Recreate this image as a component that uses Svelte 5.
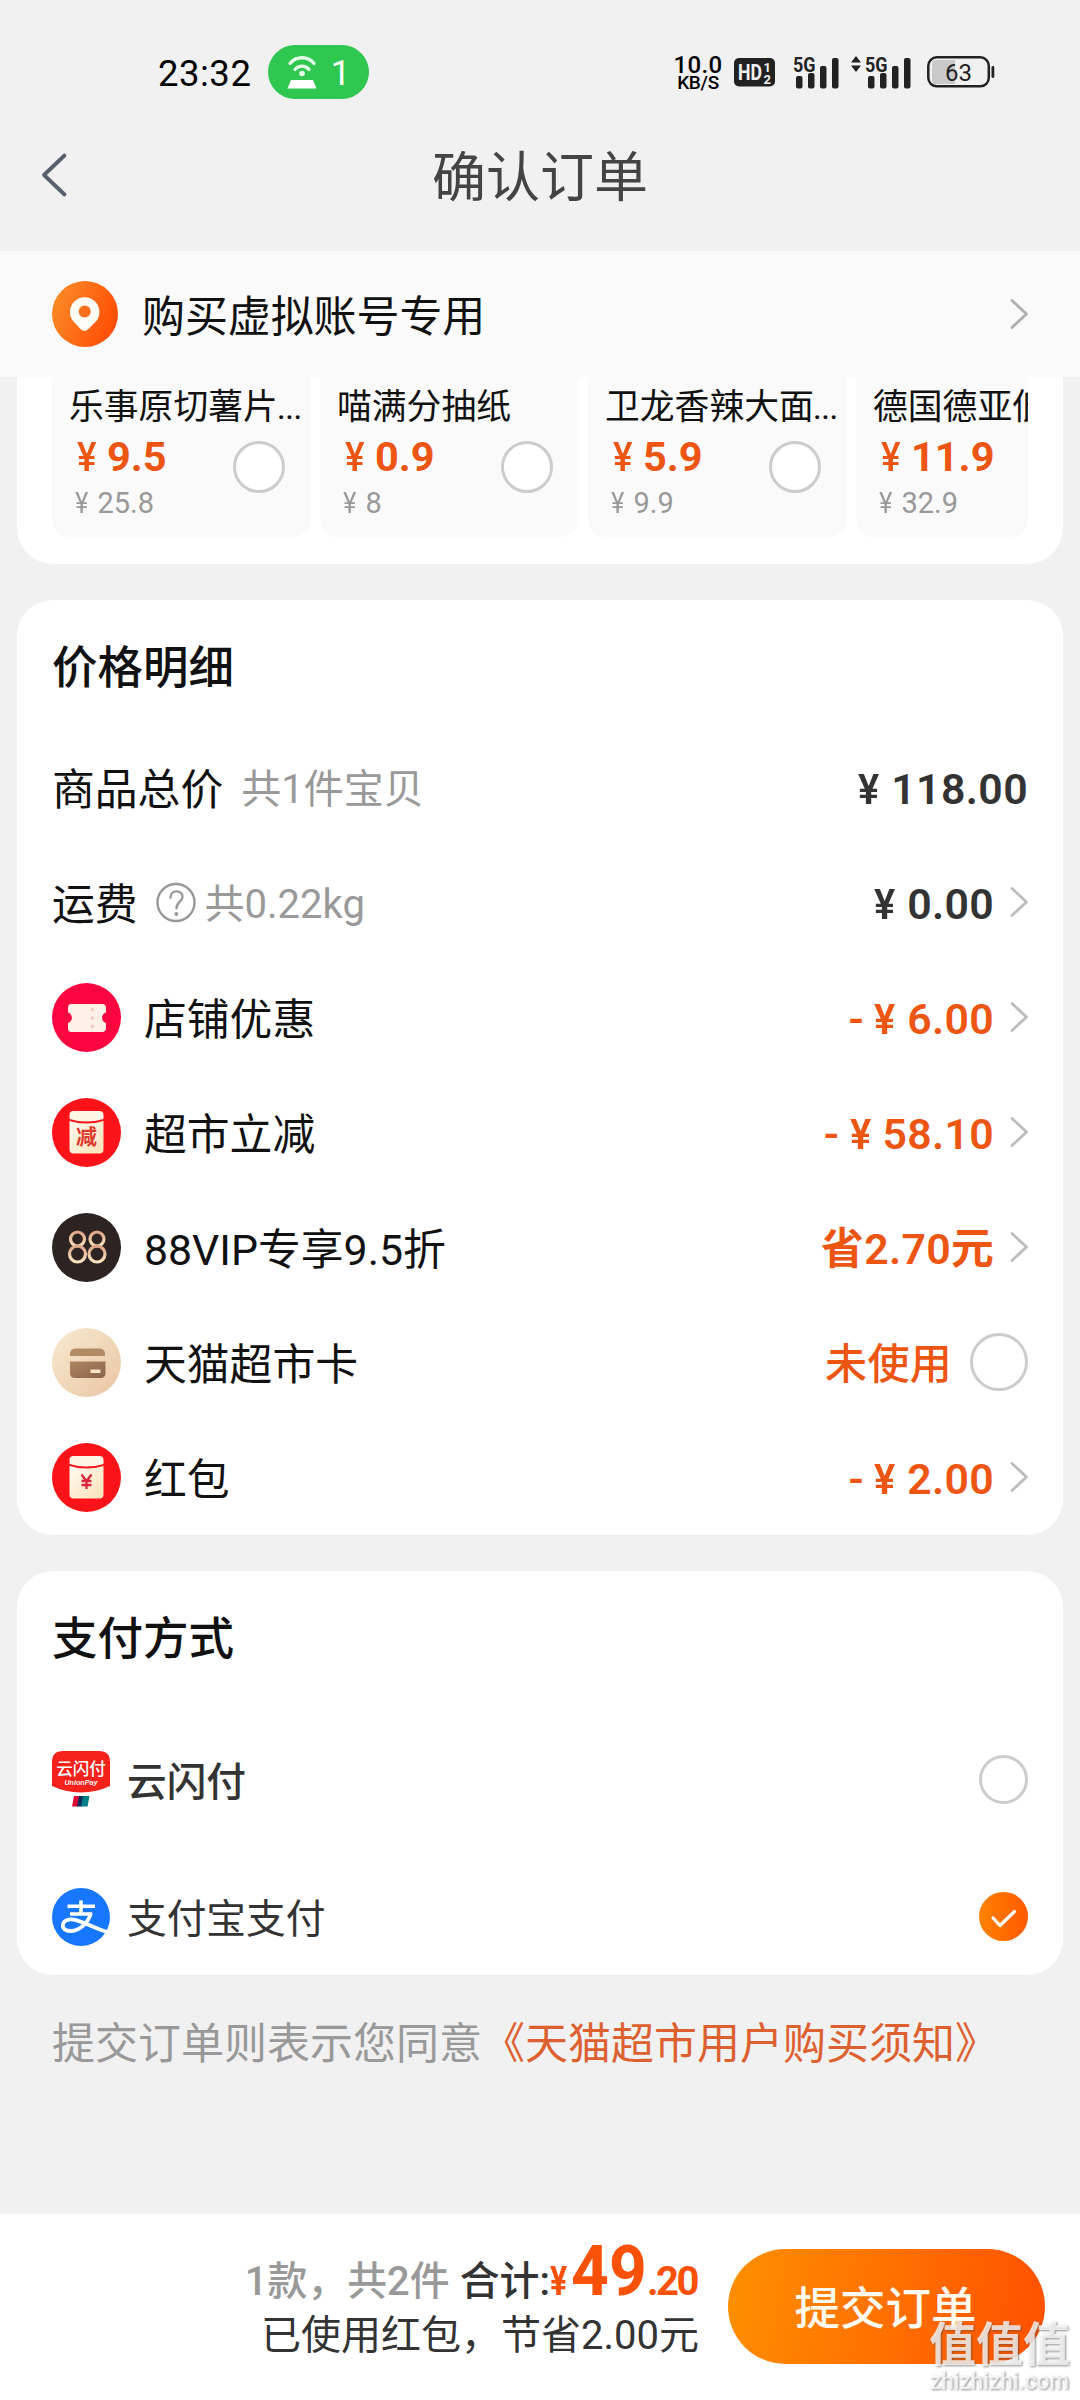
<script>
  const tiles = [
    { name: '乐事原切薯片', dots: true, price: '9.5', old: '25.8' },
    { name: '喵满分抽纸', dots: false, price: '0.9', old: '8' },
    { name: '卫龙香辣大面', dots: true, price: '5.9', old: '9.9' },
    { name: '德国德亚低脂', dots: false, price: '11.9', old: '32.9' }
  ];
  const discounts = [
    { icon: 'coupon', label: '店铺优惠', minus: true, yen: true, value: '6.00' },
    { icon: 'cut', label: '超市立减', minus: true, yen: true, value: '58.10' },
    { icon: 'vip', label: '88VIP专享9.5折', value: '省2.70元' },
    { icon: 'card', label: '天猫超市卡', value: '未使用', radio: true },
    { icon: 'packet', label: '红包', minus: true, yen: true, value: '2.00' }
  ];
</script>

{#snippet chevron()}
  <svg class="chev" viewBox="0 0 20 32"><path d="M3 2.500 17.500 16 3 29.500" fill="none" stroke="currentColor" stroke-width="2.800" stroke-linecap="round" stroke-linejoin="round" /></svg>
{/snippet}

{#snippet signal()}
  <svg width="46" height="33" viewBox="0 0 46 33">
    <text x="0" y="16" font-size="21" font-weight="700" textLength="22.500" lengthAdjust="spacingAndGlyphs" fill="#222">5G</text>
    <g fill="#222"><rect x="3" y="20" width="6.5" height="12.5" rx="2" /><rect x="15" y="17" width="6.5" height="15.5" rx="2" /><rect x="27" y="10" width="6.5" height="22.5" rx="2" /><rect x="39" y="2" width="6.5" height="30.5" rx="2" /></g>
  </svg>
{/snippet}

{#snippet envelope(id)}
  <linearGradient id={id} x1="0" y1="0" x2="1" y2="1"><stop offset="0" stop-color="#fffaf0" /><stop offset="1" stop-color="#fbe2b8" /></linearGradient>
  <circle cx="34.5" cy="34.5" r="34.5" fill="#fb1319" />
  <path d="M17.500 17q0-4 4-4h26q4 0 4 4v4q-17 5-34 0z" fill="#fff6e8" />
  <path d="M17.500 23q17 5 34 0v28.500q0 4-4 4h-26q-4 0-4-4z" fill="url(#{id})" />
{/snippet}

<div class="screen">
  <div class="status">
    <span class="clock">23:32</span>
    <span class="hotspot">
      <svg width="30" height="34" viewBox="0 0 30 34">
        <g fill="none" stroke="#e4ffe8" stroke-width="3.4" stroke-linecap="round"><path d="M3 8.500a15.500 15.500 0 0 1 24 0" /><path d="M8 14.500a9 9 0 0 1 14 0" /></g>
        <circle cx="15" cy="18.500" r="2.800" fill="#e4ffe8" />
        <path d="M4 25h22l3.500 8.500H.5z" fill="#fff" />
      </svg>
      <b>1</b>
    </span>
    <span class="speed"><b>10.0</b><i>KB/S</i></span>
    <svg class="hd" width="41" height="29" viewBox="0 0 41 29">
      <rect width="41" height="28.500" rx="5" fill="#222" />
      <g fill="#f2f2f2" font-weight="700"><text x="4" y="21.500" font-size="22" textLength="24" lengthAdjust="spacingAndGlyphs">HD</text><text x="29.500" y="13.500" font-size="13">1</text><text x="29.500" y="25.500" font-size="13">2</text></g>
    </svg>
    {@render signal()}
    <svg class="arrows" width="12" height="16" viewBox="0 0 12 16"><path d="M6 0l5 6.500H1zM6 16l5-6.500H1z" fill="#222" /></svg>
    {@render signal()}
    <svg class="battery" width="68" height="32" viewBox="0 0 68 32">
      <path d="M9 4h19v24H9q-4 0-4-4V8q0-4 4-4z" fill="#c9c9c9" />
      <rect x="1.300" y="1.300" width="60.500" height="29" rx="8.500" fill="none" stroke="#222" stroke-width="2.500" />
      <rect x="64.500" y="10" width="2.800" height="12" rx="1.400" fill="#222" />
      <text x="18" y="24.500" font-size="24" textLength="27" fill="#222">63</text>
    </svg>
  </div>

  <header>
    <svg class="back" width="26" height="44" viewBox="0 0 26 44"><path d="M23.500 2.500 3 22l20.500 19.500" fill="none" stroke="#59616f" stroke-width="3.800" stroke-linecap="round" stroke-linejoin="round" /></svg>
    <h1>确认订单</h1>
  </header>

  <div class="address">
    <svg width="66" height="66" viewBox="0 0 66 66">
      <linearGradient id="pin" x1="0" y1=".3" x2="1" y2=".7"><stop offset="0" stop-color="#fb8b25" /><stop offset="1" stop-color="#ff4a05" /></linearGradient>
      <circle cx="33" cy="33" r="33" fill="url(#pin)" />
      <path d="M32.500 50q-2 0-4-2l-7-7.500Q18 37 18 31a14.700 14.700 0 0 1 29.400 0q0 6-3.500 9.500l-7.400 7.500q-2 2-4 2z" fill="#fffdf5" />
      <circle cx="32.700" cy="30.500" r="6" fill="#f96f1b" />
    </svg>
    <span>购买虚拟账号专用</span>
    {@render chevron()}
  </div>

  <section class="card goods">
    <div class="tiles">
      {#each tiles as t}
        <div class="tile">
          <p class="name">{t.name}{#if t.dots}<em>...</em>{/if}</p>
          <div class="buy">
            <div><p class="now"><span>¥</span>{t.price}</p><p class="old"><span>¥</span>{t.old}</p></div>
            <span class="radio"></span>
          </div>
        </div>
      {/each}
    </div>
  </section>

  <section class="card prices">
    <h2>价格明细</h2>
    <div class="row">
      <span class="label">商品总价</span><span class="note total">共1件宝贝</span>
      <span class="value dark end"><span class="yen">¥</span>118.00</span>
    </div>
    <div class="row">
      <span class="label">运费</span>
      <svg class="help" width="40" height="41" viewBox="0 0 40 41"><circle cx="20" cy="20.500" r="18.500" fill="none" stroke="#999" stroke-width="2.400" /><path d="M14.500 15.500c0-8 12-8 12-.8 0 5-6 5-6 11.500" fill="none" stroke="#999" stroke-width="2.400" stroke-linecap="round" /><circle cx="20.400" cy="32" r="2" fill="#999" /></svg>
      <span class="note">共0.22kg</span>
      <span class="value dark"><span class="yen">¥</span>0.00</span>{@render chevron()}
    </div>
    {#each discounts as d}
      <div class="row">
        <svg class="icon" width="69" height="69" viewBox="0 0 69 69">
          {#if d.icon === 'coupon'}
            <circle cx="34.500" cy="34.500" r="34.500" fill="#fb0541" />
            <path d="M19 21h31q4 0 4 4v4.500a5.500 5.500 0 0 0 0 10.500v5q0 4-4 4H19q-3 0-3-4v-5a5.500 5.500 0 0 0 0-10.500V25q0-4 3-4z" fill="#fff0e8" />
            <g fill="#f6c9bf"><circle cx="40.500" cy="26.500" r="1.800" /><circle cx="40.500" cy="35" r="1.800" /><circle cx="40.500" cy="43.500" r="1.800" /></g>
          {:else if d.icon === 'cut'}
            {@render envelope('envA')}
            <text x="34.500" y="46" font-size="21" font-weight="700" text-anchor="middle" fill="#e0362c">减</text>
          {:else if d.icon === 'vip'}
            <linearGradient id="gold" x1="0" y1="0" x2="0" y2="1"><stop offset="0" stop-color="#dca484" /><stop offset="1" stop-color="#fbe5c0" /></linearGradient>
            <circle cx="34.500" cy="34.500" r="34.500" fill="#2c2322" />
            <g fill="none" stroke="url(#gold)" stroke-width="3.200"><circle cx="25.500" cy="26" r="7" /><circle cx="25.500" cy="41" r="8" /><circle cx="45" cy="26" r="7" /><circle cx="45" cy="41" r="8" /></g>
          {:else if d.icon === 'card'}
            <linearGradient id="sand" x1="0" y1="0" x2="1" y2="1"><stop offset="0" stop-color="#f8ead0" /><stop offset="1" stop-color="#eac5a4" /></linearGradient>
            <linearGradient id="brown" x1="0" y1="0" x2="1" y2="1"><stop offset="0" stop-color="#b08762" /><stop offset="1" stop-color="#8a6248" /></linearGradient>
            <circle cx="34.500" cy="34.500" r="34.500" fill="url(#sand)" />
            <path d="M18 28v-2q0-5.500 6-5.500h23q6 0 6 5.500v2z" fill="#b38a66" />
            <path d="M18 33.500h35.500V45q0 5-5 5H23q-5 0-5-5z" fill="url(#brown)" />
            <rect x="38.500" y="41.500" width="10" height="3.500" fill="#f8e3c8" />
          {:else}
            {@render envelope('envB')}
            <path d="M29.500 31.500l5 6.500 5-6.500M34.500 38v8M29.500 38h10M29.500 42h10" fill="none" stroke="#d8263c" stroke-width="2.300" />
          {/if}
        </svg>
        <span class="label">{d.label}</span>
        <span class="value" class:word={d.radio}>{#if d.minus}<span class="minus">-</span>{/if}{#if d.yen}<span class="yen">¥</span>{/if}{d.value}</span>
        {#if d.radio}<span class="radio big"></span>{:else}{@render chevron()}{/if}
      </div>
    {/each}
  </section>

  <section class="card pay">
    <h2>支付方式</h2>
    <div class="method">
      <svg width="58" height="58" viewBox="0 0 58 58">
        <path d="M11 0h36q11 0 11 11v24q-14 6.500-29 6.500T0 35V11Q0 0 11 0z" fill="#f5221c" />
        <g fill="#fff" text-anchor="middle"><text x="29" y="23.500" font-size="16.500" font-weight="500">云闪付</text><text x="29" y="34" font-size="8" font-style="italic" font-weight="500">UnionPay</text></g>
        <path d="M22 45h6l-2 10.500h-6z" fill="#e00b35" /><path d="M27 45h5l-2 10.500h-5z" fill="#0b2d5c" /><path d="M31 45h6.500l-2 10.500h-6.500z" fill="#007e86" />
      </svg>
      <span class="strong">云闪付</span><span class="radio small"></span>
    </div>
    <div class="method">
      <svg width="58" height="58" viewBox="0 0 58 58">
        <circle cx="29" cy="29" r="29" fill="#1777ff" />
        <g fill="none" stroke="#fff"><path d="M15.500 18.200h27.500M18 26h22M29 12.500V26" stroke-width="3.600" /><path d="M39 25C36 35 28 42.500 19 43c-6 .2-8.500-3-8.200-6 .5-4 5-6.500 11-5.300C31 33.500 42 40 56.500 44.500" stroke-width="3.800" /></g>
      </svg>
      <span>支付宝支付</span>
      <svg class="check" width="49" height="49" viewBox="0 0 49 49"><linearGradient id="ok" x1="0" y1="0" x2="1" y2="0"><stop offset="0" stop-color="#ff8200" /><stop offset="1" stop-color="#ff5a00" /></linearGradient><circle cx="24.500" cy="24.500" r="24.500" fill="url(#ok)" /><path d="M14 26l7 7.500L35.500 19.500" fill="none" stroke="#fff" stroke-width="3.200" stroke-linecap="round" stroke-linejoin="round" /></svg>
    </div>
  </section>

  <p class="terms">提交订单则表示您同意<a>《天猫超市用户购买须知》</a></p>

  <footer>
    <div class="sum">
      <p class="line"><span class="count">1款，共2件</span><span class="total-label">合计:</span><b class="cur">¥</b><b class="int">49</b><b class="dec">.20</b></p>
      <p class="saved">已使用红包，节省2.00元</p>
    </div>
    <button>提交订单</button>
  </footer>

  <div class="mark">
    <svg width="150" height="82" viewBox="0 0 150 82">
      <g fill="#fff" fill-opacity=".78"><text x="4" y="47" font-size="47" font-weight="700" textLength="141">值值值</text><text x="5" y="75" font-size="24" font-weight="500" textLength="139" lengthAdjust="spacingAndGlyphs">zhizhizhi.com</text></g>
    </svg>
  </div>
</div>

<style>
  :global(body) { background: #f1f1f1; }
  .screen { position: relative; width: 1080px; height: 2400px; overflow: hidden; display: flex; flex-direction: column; background: #f1f1f1; color: #111; font-family: Roboto, 'Noto Sans CJK SC', sans-serif; }
  p, h1, h2 { margin: 0; }
  svg { flex: none; display: block; overflow: visible; }

  .status { padding: 44px 85px 0 158px; height: 56px; display: flex; align-items: center; color: #111; }
  .clock { font-size: 36.500px; letter-spacing: .5px; width: 110px; padding-top: 2px; color: #000; }
  .hotspot { width: 101px; height: 54px; border-radius: 27px; background: #2fc74f; display: flex; align-items: center; justify-content: center; gap: 14px; color: #fff; box-sizing: border-box; }
  .hotspot b { font-size: 35px; font-weight: 400; padding-top: 2px; }
  .speed { margin-left: auto; display: flex; flex-direction: column; align-items: center; width: 50px; padding-top: 2px; color: #000; }
  .speed b { font-size: 24px; line-height: 20px; font-weight: 500; letter-spacing: .4px; }
  .speed i { font-style: normal; font-size: 19px; line-height: 16px; font-weight: 500; letter-spacing: -.3px; }
  .hd { margin: 0 18px 0 11px; }
  .arrows { margin: 0 3px 16px 11px; }
  .battery { margin-left: 16px; }

  header { height: 151px; display: flex; justify-content: center; align-items: center; position: relative; box-sizing: border-box; padding-top: 7px; }
  .back { position: absolute; left: 41px; top: 53px; }
  h1 { font-size: 54px; font-weight: 400; color: #444; line-height: 60px; }

  .address { height: 126px; background: #fafafa; display: flex; align-items: center; padding: 0 51px 0 52px; box-sizing: border-box; color: #111; font-size: 43px; }
  .address span { margin-left: 24px; flex: 1; letter-spacing: -.1px; margin-top: -2px; }
  .address .chev { color: #b0b0b0; }
  .chev { width: 20px; height: 32px; color: #bdbdbd; margin-left: 15px; }

  .card { margin: 0 17px 36px; background: #fff; border-radius: 36px; padding: 0 35px; box-sizing: border-box; flex: none; }
  .goods { height: 187px; border-radius: 0 0 36px 36px; }
  .tiles { display: flex; gap: 10px; overflow: hidden; border-radius: 0 0 18px 18px; }
  .tile { flex: none; width: 258px; height: 160px; background: #fafafa; border-radius: 0 0 18px 18px; }
  .name { font-size: 34.800px; line-height: 40px; padding: 10px 0 0 17px; white-space: nowrap; }
  .name em { font-style: normal; letter-spacing: -.9px; margin-left: -1px; }
  .buy { display: flex; justify-content: space-between; padding: 10px 25px 0 23px; }
  .now { font-size: 41.500px; line-height: 40px; font-weight: 700; color: #ec5512; padding-left: 2px; white-space: nowrap; }
  .now span { font-size: 40px; font-weight: 500; display: inline-block; transform: scaleX(.92); transform-origin: 0 50%; width: 30px; }
  .old { font-size: 29px; line-height: 36px; margin-top: 7px; color: #999; }
  .old span { display: inline-block; width: 22.500px; transform: scaleX(.88); transform-origin: 0 50%; }
  .radio { width: 52px; height: 52px; box-sizing: border-box; border: 3px solid #ccc; border-radius: 50%; background: #fff; margin-top: 4px; flex: none; }
  .radio.big { width: 58px; height: 58px; margin: 0 0 0 18px; }
  .radio.small { width: 49px; height: 49px; margin: 0 0 0 auto; }

  h2 { font-size: 45.500px; font-weight: 500; line-height: 60px; color: #111; }
  .prices { height: 935px; padding-top: 39px; }
  .prices h2 { margin-bottom: 32px; }
  .row { height: 115px; display: flex; align-items: center; box-sizing: border-box; padding-bottom: 3px; }
  .row > .chev { margin-right: -1px; }
  .icon { margin-right: 23px; }
  .label { font-size: 42.800px; line-height: 60px; padding-top: 5px; }
  .note { font-size: 40px; line-height: 60px; color: #999; padding-top: 5px; }
  .note.total { margin-left: 18px; }
  .help { margin: 0 9px 0 18px; }
  .value { margin-left: auto; font-size: 42.800px; line-height: 60px; letter-spacing: .3px; font-weight: 600; color: #ec5512; padding-top: 3px; white-space: nowrap; }
  .value.dark { color: #333; }
  .value.end { letter-spacing: .4px; }
  .value.word { font-weight: 500; font-size: 42px; padding-top: 5px; }
  .yen { display: inline-block; transform: scaleX(.93); transform-origin: 0 50%; width: 33px; }
  .minus { margin-right: 10px; }

  .pay { height: 404px; padding-top: 39px; }
  .pay h2 { margin-bottom: 41px; }
  .method { height: 137px; display: flex; align-items: center; font-size: 39.700px; color: #333; }
  .method span:not(.radio) { margin-left: 17px; padding-bottom: 3px; }
  .method .strong { font-weight: 500; }
  .check { margin-left: auto; }

  .terms { padding: 3px 0 0 52px; font-size: 43px; line-height: 60px; color: #999; white-space: nowrap; flex: none; }
  a { color: #dd6130; }

  footer { margin-top: auto; height: 186px; background: #fff; display: flex; padding: 0 35px 0 0; box-sizing: border-box; }
  .sum { margin-left: auto; text-align: right; padding-top: 27px; }
  .line { display: flex; justify-content: flex-end; align-items: baseline; height: 65px; line-height: 60px; font-size: 39.900px; white-space: nowrap; }
  .count { color: #999; font-weight: 500; margin-right: 10px; }
  .total-label { color: #333; font-weight: 500; }
  .line b { color: #f95208; }
  .cur { font-size: 40px; display: inline-block; transform: scaleX(.8); transform-origin: 0 50%; width: 21px; }
  .int { font-size: 71px; display: inline-block; transform: scaleX(.93); transform-origin: 0 50%; width: 76px; }
  .dec { font-size: 40px; letter-spacing: -2.500px; margin-right: 2px; }
  .saved { font-size: 40px; line-height: 59px; color: #333; }
  button { width: 317px; height: 115px; margin: 35px 0 0 29px; border: 0; padding: 0 2px 3px 0; border-radius: 58px; background: linear-gradient(100deg, #ff9000, #ff5000); color: #fffaf0; font: 500 45.500px Roboto, 'Noto Sans CJK SC', sans-serif; }

  .mark { position: absolute; right: 5px; bottom: 4px; filter: drop-shadow(1.500px 1.500px 1px rgba(70, 70, 70, .75)); }
</style>
